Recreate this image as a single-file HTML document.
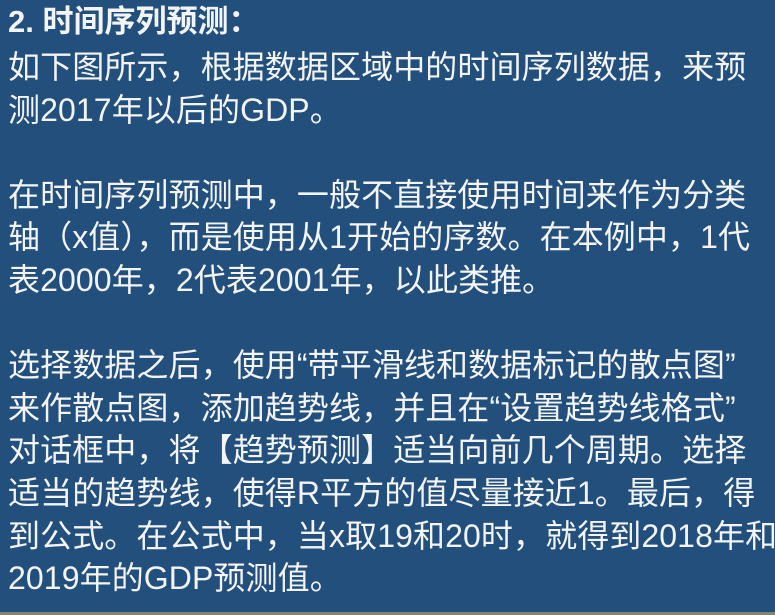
<!DOCTYPE html>
<html><head><meta charset="utf-8"><style>
html,body{margin:0;padding:0}
body{width:775px;height:615px;overflow:hidden;background:#234f7c;position:relative;font-family:"Liberation Sans","Noto Sans CJK SC",sans-serif;color:#f2f4f7}
.t{position:absolute;left:8px;top:3px;font-size:31px;font-weight:bold;line-height:38px;white-space:nowrap}
.b{position:absolute;left:8px;top:46px;font-size:32px;line-height:42.6px;white-space:nowrap;letter-spacing:0.1px}
.bar{position:absolute;left:0;bottom:0;width:775px;height:3px;background:#8a8270}
</style></head><body>
<div class="t">2. 时间序列预测：</div>
<div class="b">如下图所示，根据数据区域中的时间序列数据，来预<br>测2017年以后的GDP。<br>&nbsp;<br>在时间序列预测中，一般不直接使用时间来作为分类<br>轴（x值），而是使用从1开始的序数。在本例中，1代<br>表2000年，2代表2001年，以此类推。<br>&nbsp;<br>选择数据之后，使用“带平滑线和数据标记的散点图”<br>来作散点图，添加趋势线，并且在“设置趋势线格式”<br>对话框中，将【趋势预测】适当向前几个周期。选择<br>适当的趋势线，使得R平方的值尽量接近1。最后，得<br>到公式。在公式中，当x取19和20时，就得到2018年和<br>2019年的GDP预测值。</div>
<div class="bar"></div>
</body></html>
